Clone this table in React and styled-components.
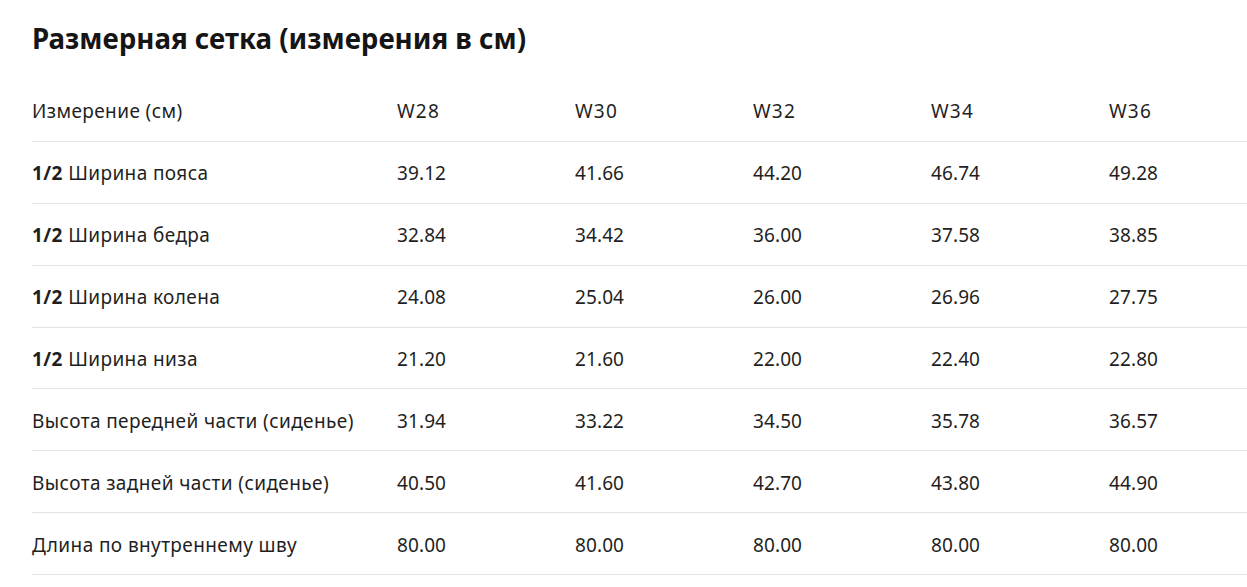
import React from 'react'
import styled, { createGlobalStyle } from 'styled-components'

const sizes = ['W28', 'W30', 'W32', 'W34', 'W36']

const rows = [
  { half: true, label: 'Ширина пояса', values: ['39.12', '41.66', '44.20', '46.74', '49.28'] },
  { half: true, label: 'Ширина бедра', values: ['32.84', '34.42', '36.00', '37.58', '38.85'] },
  { half: true, label: 'Ширина колена', values: ['24.08', '25.04', '26.00', '26.96', '27.75'] },
  { half: true, label: 'Ширина низа', values: ['21.20', '21.60', '22.00', '22.40', '22.80'] },
  { label: 'Высота передней части (сиденье)', values: ['31.94', '33.22', '34.50', '35.78', '36.57'] },
  { label: 'Высота задней части (сиденье)', values: ['40.50', '41.60', '42.70', '43.80', '44.90'] },
  { label: 'Длина по внутреннему шву', values: ['80.00', '80.00', '80.00', '80.00', '80.00'] },
]

const App = () => (
  <>
    <GlobalStyle />
    <Root>
      <Title>Размерная сетка (измерения в см)</Title>
      <Table>
        <Row>
          <Cell label>Измерение (см)</Cell>
          {sizes.map(s => (
            <Cell key={s} wide>{s}</Cell>
          ))}
        </Row>
        {rows.map(r => (
          <Row key={r.label}>
            <Cell label>
              {r.half && <Strong>1/2 </Strong>}
              {r.label}
            </Cell>
            {r.values.map((v, i) => (
              <Cell key={i}>{v}</Cell>
            ))}
          </Row>
        ))}
      </Table>
    </Root>
  </>
)

export default App

// #region styled-components
const GlobalStyle = createGlobalStyle`
  body {
    margin: 0;
    background: #fff;
    overflow: hidden;
    font-family: "Noto Sans", "Open Sans", sans-serif;
    color: #1f1f1f;
  }
`

const Root = styled.div`
  padding: 19px 0 0 32px;
`

const Title = styled.h1`
  margin: 0;
  font-size: 27.7px;
  line-height: 38px;
  font-weight: 700;
  color: #151515;
`

const Table = styled.div`
  margin-top: 23px;
  width: 1260px;
`

const Row = styled.div`
  display: grid;
  grid-template-columns: 365px repeat(5, 178px);
  align-items: center;
  height: 60.9px;
  border-bottom: 1px solid #e3e3e3;
`

const Cell = styled.div.withConfig({
  shouldForwardProp: p => p !== 'label' && p !== 'wide',
})`
  font-size: 19px;
  line-height: 24px;
  padding-top: 2px;
  white-space: nowrap;
  letter-spacing: ${p => (p.label ? '0.4px' : p.wide ? '1.2px' : '0.1px')};
`

const Strong = styled.span`
  font-weight: 700;
`
// #endregion
